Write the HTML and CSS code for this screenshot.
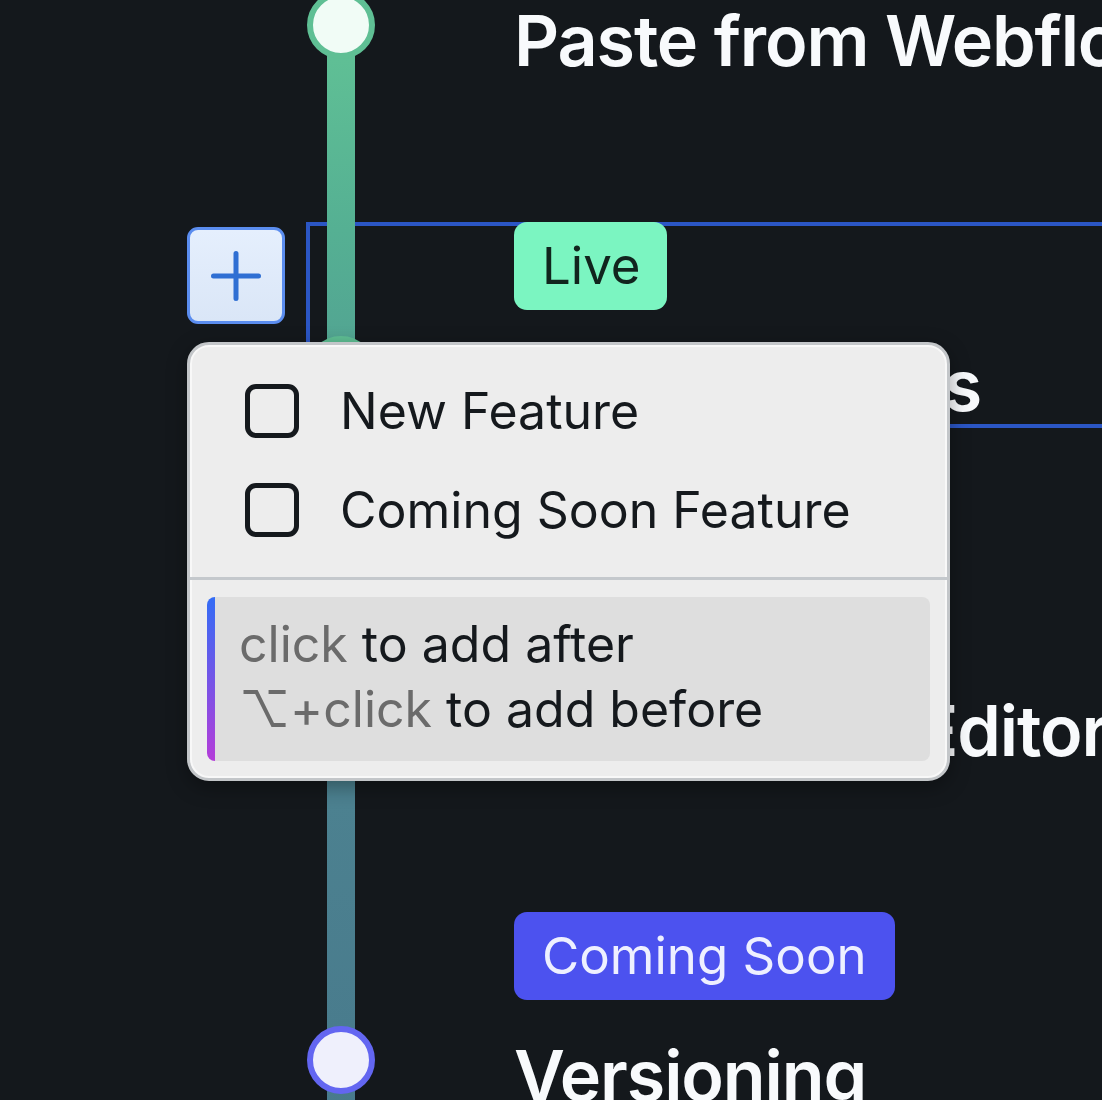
FILE: index.html
```html
<!DOCTYPE html>
<html lang="en">
<head>
<meta charset="utf-8">
<title>Roadmap timeline</title>
<link rel="stylesheet" href="styles.css">
</head>
<body>
<div class="stage">
  <div class="timeline">
    <div class="item">
      <div class="node-col"><span class="node node-live"></span></div>
      <div class="content">
        <span class="tag tag-live">Live</span>
        <h2 class="title">Paste from Webflow</h2>
      </div>
    </div>
    <div class="item selected">
      <div class="node-col"><span class="node node-live"></span></div>
      <div class="content">
        <span class="tag tag-live">Live</span>
        <h2 class="title">Custom Fields</h2>
      </div>
    </div>
    <div class="item">
      <div class="node-col"><span class="node node-live"></span></div>
      <div class="content">
        <span class="tag tag-live">Live</span>
        <h2 class="title">Component Editor</h2>
      </div>
    </div>
    <div class="item">
      <div class="node-col"><span class="node node-soon"></span></div>
      <div class="content">
        <span class="tag tag-soon">Coming Soon</span>
        <h2 class="title">Versioning</h2>
      </div>
    </div>
  </div>

  <button class="add-btn" type="button" aria-label="Add">
    <svg width="50" height="50" viewBox="0 0 50 50" fill="none" stroke="currentColor" stroke-width="5" stroke-linecap="round">
      <path d="M25 2.5V47.5M2.5 25H47.5"/>
    </svg>
  </button>

  <div class="menu">
    <div class="menu-list">
      <div class="menu-row"><span class="check"></span><span class="menu-label">New Feature</span></div>
      <div class="menu-row"><span class="check"></span><span class="menu-label">Coming Soon Feature</span></div>
    </div>
    <div class="menu-divider"></div>
    <div class="menu-foot">
      <div class="hint">
        <div class="hint-line"><span class="muted">click</span> to add after</div>
        <div class="hint-line"><span class="muted">⌥+click</span> to add before</div>
      </div>
    </div>
  </div>
</div>
</body>
</html>
```

FILE: styles.css
```css
html {
  margin: 0;
  padding: 0;
  overflow: hidden;
  background: #14181c;
}

body {
  margin: 0;
  padding: 0;
  overflow: hidden;
  font-family: Inter, "Noto Sans", sans-serif;
  width: 1102px;
  height: 1100px;
}

.stage {
  position: relative;
  width: 1102px;
  height: 1100px;
  overflow: hidden;
}

.timeline {
  margin-top: -123px;
  margin-left: 306px;
  width: 1000px;
  display: flex;
  flex-direction: column;
  gap: 139px;
  background-image: linear-gradient(to bottom,
    #62c498 0px,
    #5fbf95 183px,
    #55b093 353px,
    #4f9691 620px,
    #4c8190 923px,
    #487a8c 1241px);
  background-repeat: no-repeat;
  background-position: 21px 0;
  background-size: 28px 100%;
}

.item {
  display: grid;
  grid-template-columns: 70px 1fr;
  column-gap: 138px;
  height: 206px;
}

.item.selected {
  position: relative;
}

.item.selected::before {
  content: "";
  position: absolute;
  inset: 0;
  border: 4px solid #2b56c4;
  z-index: -1;
}

.node-col {
  display: flex;
  justify-content: center;
  align-items: flex-start;
}

.node {
  display: block;
  box-sizing: border-box;
  width: 68px;
  height: 68px;
  margin-top: 114px;
  border-radius: 50%;
  border: 6px solid;
}

.node-live {
  border-color: #5fbf94;
  background: #f1fcf6;
}

.node-soon {
  border-color: #6366f1;
  background: #eff0fc;
}

.content {
  display: flex;
  flex-direction: column;
  align-items: flex-start;
}

.tag {
  display: inline-block;
  height: 88px;
  line-height: 88px;
  padding: 0 26px 0 28px;
  border-radius: 13px;
  font-size: 51px;
  font-weight: 400;
  margin-bottom: 34px;
  white-space: nowrap;
}

.tag-live {
  background: #7bf5c1;
  color: #11251e;
}

.tag-soon {
  background: #4c52ef;
  color: #eef0ff;
  padding-right: 28px;
}

.title {
  margin: 0;
  font-size: 70px;
  line-height: 84px;
  font-weight: 600;
  letter-spacing: -1.1px;
  color: #f8fafc;
  white-space: nowrap;
}

.add-btn {
  position: absolute;
  left: 187px;
  top: 227px;
  width: 98px;
  height: 97px;
  box-sizing: border-box;
  padding: 0;
  margin: 0;
  border: 3px solid #5b8def;
  border-radius: 11px;
  background: linear-gradient(to bottom, #e5effd, #dae6f7);
  color: #2f6fd3;
  display: flex;
  align-items: center;
  justify-content: center;
}

.menu {
  position: absolute;
  left: 187px;
  top: 342px;
  width: 763px;
  box-sizing: border-box;
  border: 3px solid #c3c6c9;
  border-radius: 22px;
  background: #ededed;
  box-shadow: inset 0 0 0 2px #f8f8f8, 0 6px 20px rgba(0, 0, 0, 0.35);
  color: #14181c;
}

.menu-list {
  padding: 16px 0 18px;
}

.menu-row {
  height: 99px;
  display: flex;
  align-items: center;
  gap: 41px;
  padding-left: 55px;
}

.check {
  display: block;
  box-sizing: border-box;
  width: 54px;
  height: 54px;
  border: 5px solid #15191d;
  border-radius: 11px;
  flex: none;
}

.menu-label {
  font-size: 50px;
  font-weight: 400;
  color: #15191d;
  white-space: nowrap;
}

.menu-divider {
  height: 3px;
  background: #c4c8cc;
}

.menu-foot {
  padding: 17px;
}

.hint {
  border-radius: 8px;
  background:
    linear-gradient(to bottom, #336cf5, #b43dd9) left top / 8px 100% no-repeat,
    #dedede;
  padding: 15px 20px 19px 32px;
  font-size: 50px;
  line-height: 65px;
  color: #15191d;
}

.hint-line {
  white-space: nowrap;
}

.muted {
  color: #6b6b6b;
}
```
